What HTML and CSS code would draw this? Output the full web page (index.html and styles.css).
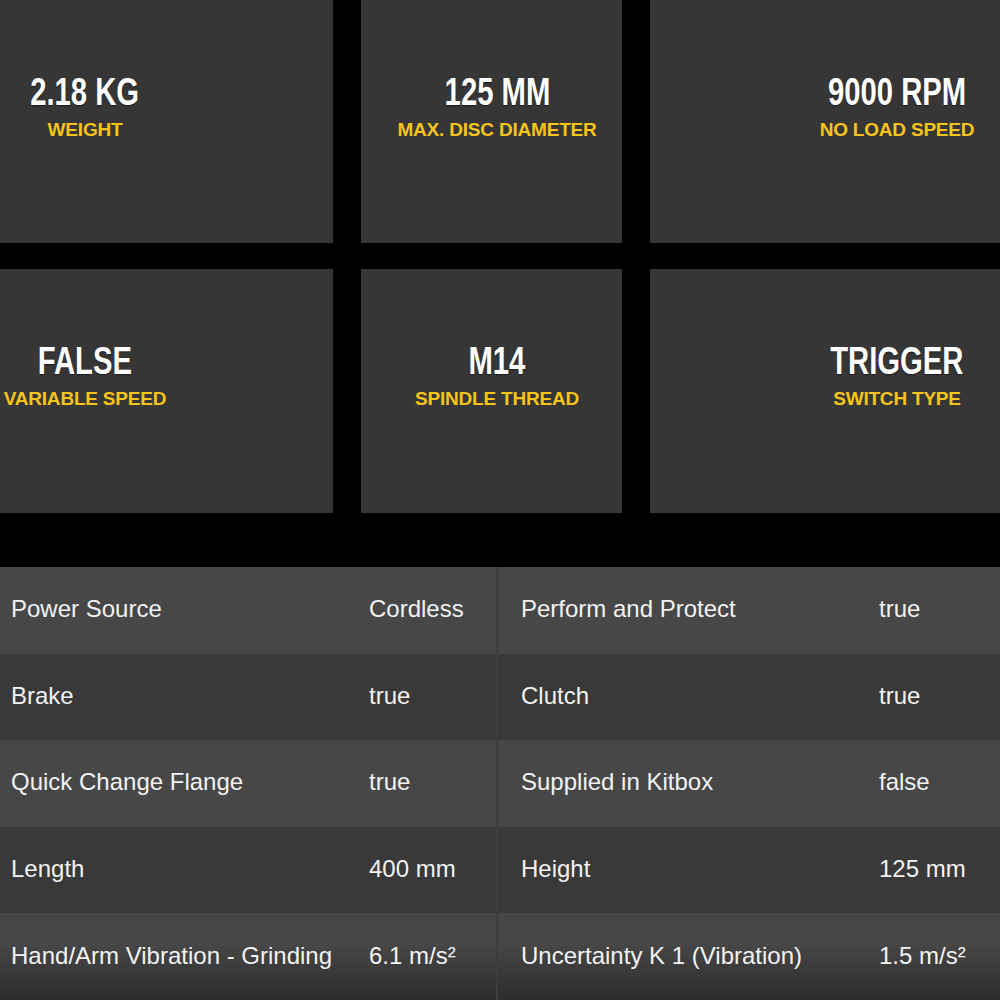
FILE: index.html
```html
<!DOCTYPE html>
<html lang="en">
<head>
<meta charset="utf-8">
<title>Specifications</title>
<link rel="stylesheet" href="styles.css">
</head>
<body>
<main class="page">
  <section class="stats">
    <div class="stat-card card-a">
      <div class="stat"><span class="stat-value">2.18 KG</span><span class="stat-label">WEIGHT</span></div>
    </div>
    <div class="stat-card card-b">
      <div class="stat"><span class="stat-value">125 MM</span><span class="stat-label">MAX. DISC DIAMETER</span></div>
    </div>
    <div class="stat-card card-c">
      <div class="stat"><span class="stat-value">9000 RPM</span><span class="stat-label">NO LOAD SPEED</span></div>
    </div>
    <div class="stat-card card-a">
      <div class="stat"><span class="stat-value">FALSE</span><span class="stat-label">VARIABLE SPEED</span></div>
    </div>
    <div class="stat-card card-b">
      <div class="stat"><span class="stat-value">M14</span><span class="stat-label">SPINDLE THREAD</span></div>
    </div>
    <div class="stat-card card-c">
      <div class="stat"><span class="stat-value">TRIGGER</span><span class="stat-label">SWITCH TYPE</span></div>
    </div>
  </section>

  <section class="specs">
    <div class="spec-table spec-left">
      <div class="spec-row"><span class="spec-name">Power Source</span><span class="spec-val">Cordless</span></div>
      <div class="spec-row"><span class="spec-name">Brake</span><span class="spec-val">true</span></div>
      <div class="spec-row"><span class="spec-name">Quick Change Flange</span><span class="spec-val">true</span></div>
      <div class="spec-row"><span class="spec-name">Length</span><span class="spec-val">400 mm</span></div>
      <div class="spec-row"><span class="spec-name">Hand/Arm Vibration - Grinding</span><span class="spec-val">6.1 m/s²</span></div>
    </div>
    <div class="spec-table spec-right">
      <div class="spec-row"><span class="spec-name">Perform and Protect</span><span class="spec-val">true</span></div>
      <div class="spec-row"><span class="spec-name">Clutch</span><span class="spec-val">true</span></div>
      <div class="spec-row"><span class="spec-name">Supplied in Kitbox</span><span class="spec-val">false</span></div>
      <div class="spec-row"><span class="spec-name">Height</span><span class="spec-val">125 mm</span></div>
      <div class="spec-row"><span class="spec-name">Uncertainty K 1 (Vibration)</span><span class="spec-val">1.5 m/s²</span></div>
    </div>
  </section>
</main>
</body>
</html>
```

FILE: styles.css
```css
* { box-sizing: border-box; }

html, body {
  margin: 0;
  padding: 0;
  background: #000;
}

.page {
  width: 1000px;
  height: 1000px;
  overflow: hidden;
  background: #000;
}

.stats {
  display: grid;
  grid-template-columns: 333px 261px 1fr;
  grid-template-rows: 243px 244px;
  column-gap: 28px;
  row-gap: 26px;
  margin-bottom: 54px;
}

.stat-card {
  background: #363636;
  padding-top: 73px;
}

.stat {
  display: flex;
  flex-direction: column;
  align-items: center;
  text-align: center;
}

.card-a .stat { width: 170px; margin-left: 0; }
.card-b .stat { width: 240px; margin-left: 16px; }
.card-c .stat { width: 220px; margin-left: 137px; }

.stat-value {
  font-family: "Liberation Sans", Arial, sans-serif;
  font-weight: 700;
  font-size: 39px;
  line-height: 38px;
  color: #ffffff;
  white-space: nowrap;
  text-shadow: 0 1px 1px rgba(0, 0, 0, 0.5);
  transform: scaleX(0.75);
}

.stat-label {
  margin-top: 8px;
  font-family: "Liberation Sans", Arial, sans-serif;
  font-weight: 700;
  font-size: 19px;
  line-height: 22px;
  color: #f6c41a;
  letter-spacing: -0.2px;
  white-space: nowrap;
}

.specs {
  display: grid;
  grid-template-columns: 496px 1fr;
  height: 433px;
}

.spec-table {
  display: grid;
  grid-template-rows: repeat(5, 1fr);
}

.spec-right {
  border-left: 2px solid #3d3d3d;
}

.spec-row {
  display: grid;
  align-items: center;
  font-family: "Liberation Sans", Arial, sans-serif;
  font-size: 24px;
  color: #f2f2f2;
}

.spec-left .spec-row { grid-template-columns: 338px 1fr; }
.spec-right .spec-row { grid-template-columns: 358px 1fr; }

.spec-row:nth-child(odd) { background: #474747; }
.spec-row:nth-child(even) { background: #393939; }
.spec-row:last-child {
  background: linear-gradient(#474747 35%, #2c2c2c 100%);
}

.spec-left .spec-name { padding-left: 11px; }
.spec-left .spec-val { padding-left: 31px; }
.spec-right .spec-name { padding-left: 23px; }
.spec-right .spec-val { padding-left: 23px; }

.spec-name, .spec-val {
  white-space: nowrap;
  padding-bottom: 2px;
}
```
